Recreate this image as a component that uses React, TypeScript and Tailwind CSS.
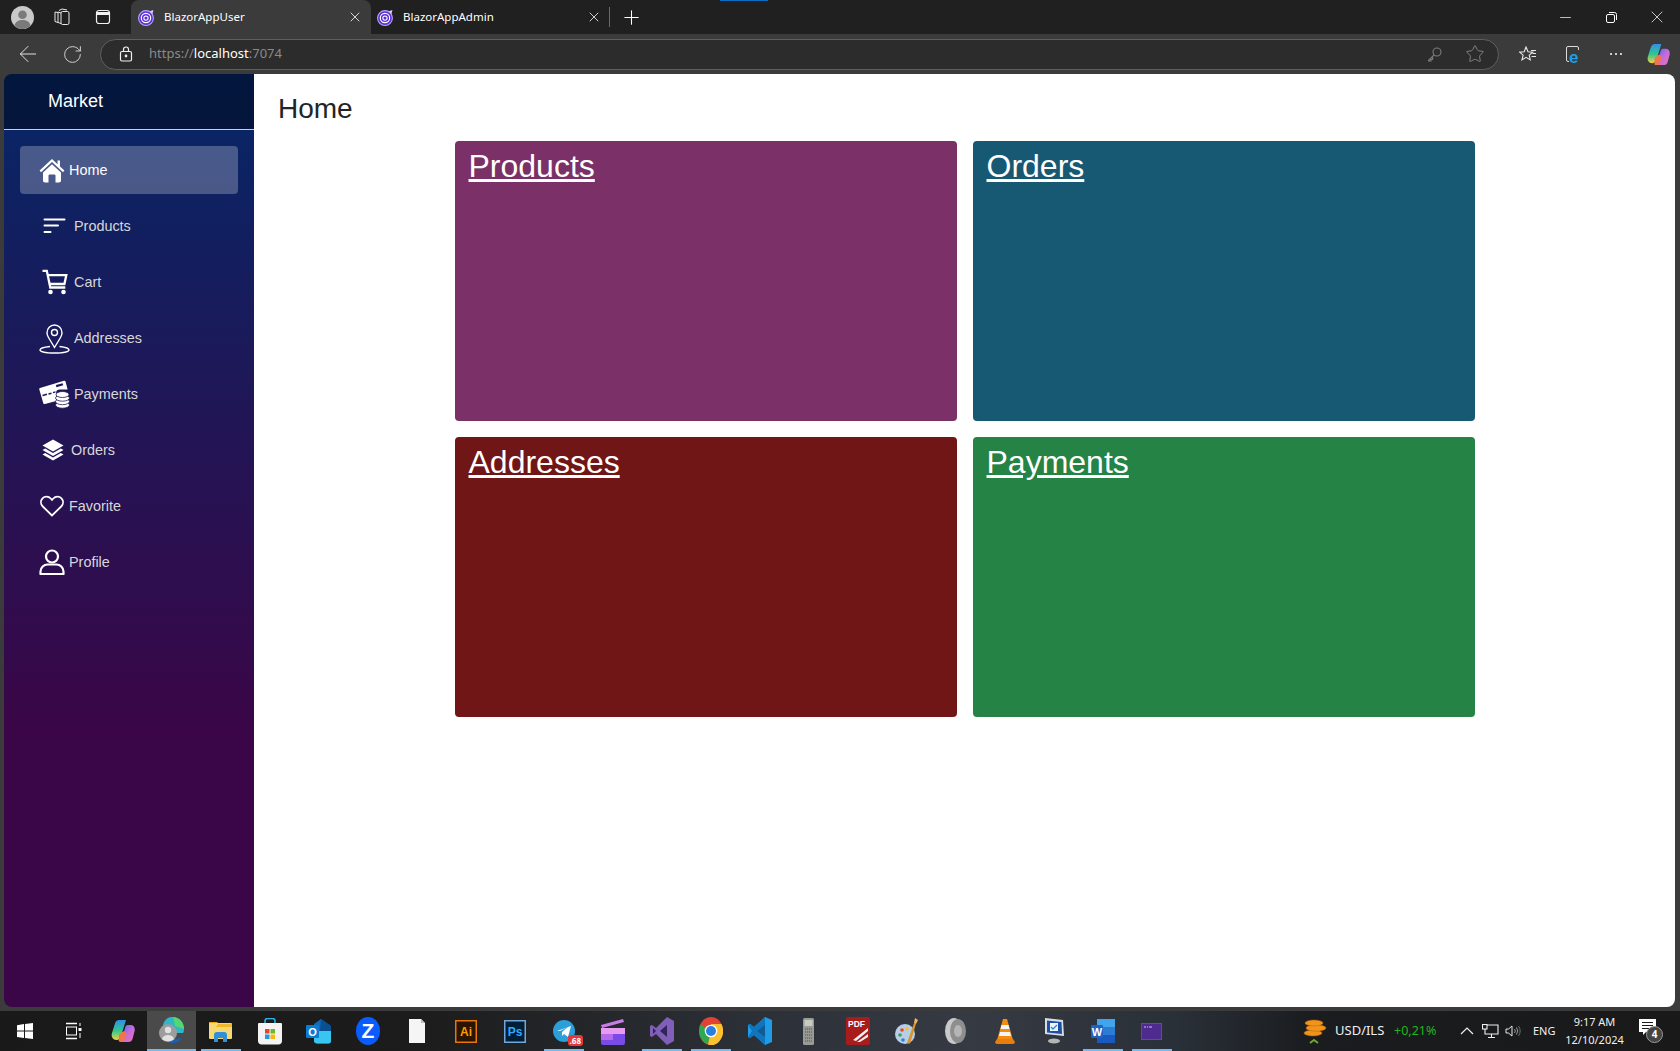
import { ArrowLeft, Minus, Plus, RotateCw, Star, X } from 'lucide-react';
import type { ReactNode } from 'react';

const SANS = "[font-family:'Liberation_Sans',Arial,sans-serif]";
const UI = "[font-family:'Noto_Sans','Open_Sans',sans-serif]";

function BlazorIcon() {
  return (
    <svg width="17" height="17" viewBox="0 0 16 16">
      <circle cx="7.5" cy="8.5" r="7" fill="#5c2fd6" stroke="#b9a6ff" strokeWidth="1" />
      <circle cx="7.5" cy="8.5" r="4.4" fill="none" stroke="#fff" strokeWidth="1.1" />
      <circle cx="7.5" cy="8.5" r="2" fill="none" stroke="#fff" strokeWidth="1" />
      <path d="M11 2 14.5 1 13.5 5z" fill="#d8ccff" />
    </svg>
  );
}

function CopilotLogo({ size = 24 }: { size?: number }) {
  return (
    <svg width={size} height={size} viewBox="0 0 24 24">
      <defs>
        <linearGradient id="cpA" x1="0" y1="0" x2="0" y2="1">
          <stop offset="0" stopColor="#2f8fe8" />
          <stop offset="0.55" stopColor="#35c88d" />
          <stop offset="1" stopColor="#f3d23c" />
        </linearGradient>
        <linearGradient id="cpB" x1="0" y1="0" x2="1" y2="1">
          <stop offset="0" stopColor="#3b6fe8" />
          <stop offset="0.5" stopColor="#c56be0" />
          <stop offset="1" stopColor="#f06fb0" />
        </linearGradient>
      </defs>
      <path d="M8 1h7L10 17c-.8 2.500-2 4-4.500 4C2 21 0 18 .8 14.500L4 4.500C4.600 2.300 6 1 8 1z" fill="url(#cpA)" />
      <path d="M10 23h7.500c2 0 3.400-1.200 4-3l2-7.500c1-3.500-.8-6.500-3.800-6.500h-3c-1.200 0-2 .7-2.300 1.800L11 19c-.3 1.500-.6 3-1 4z" fill="url(#cpB)" />
      <path d="M8 15l5-3 3 3-3.500 8H9.500c-1.500 0-2.200-1-1.700-2.500z" fill="#f0754d" />
    </svg>
  );
}

function HomeIcon() {
  return (
    <svg width="26" height="25" viewBox="0 0 26 25" fill="#fff">
      <path d="M13 1 .6 12.600 2 14.200 13 4.100l11 10.100 1.400-1.600-4.400-4.100V2.500h-2.500v3.700z" />
      <path d="M4 14.600 13 6.300l9 8.300v7.900c0 1.200-.8 2-2 2h-3.500v-6.600c0-.8-.5-1.300-1.300-1.300h-4.400c-.8 0-1.300.5-1.300 1.300v6.600H6c-1.200 0-2-.8-2-2z" />
    </svg>
  );
}

function LinesIcon() {
  return (
    <svg width="23" height="16" viewBox="0 0 23 16" fill="#fff">
      <rect x="0.500" y="0.500" width="22" height="2" rx="1" />
      <rect x="0.500" y="6.500" width="15.500" height="2" rx="1" />
      <rect x="0.500" y="13" width="8" height="2" rx="1" />
    </svg>
  );
}

function CartIcon() {
  return (
    <svg width="26" height="26" viewBox="0 0 26 26" fill="none" stroke="#fff" strokeWidth="2.300">
      <path d="M.5 1.800h4.300l3.500 16.700h15" />
      <path d="M5.800 6.200h18.500l-1.900 8.800H7.600" />
      <circle cx="8.500" cy="23" r="2.300" fill="#fff" stroke="none" />
      <circle cx="21.500" cy="23" r="2.300" fill="#fff" stroke="none" />
    </svg>
  );
}

function PinIcon() {
  return (
    <svg width="31" height="31" viewBox="0 0 31 31" fill="none" stroke="#fff" strokeWidth="1.400">
      <path d="M15.500 24.500 9.500 14.500c-1.200-2-1.500-3.300-1.500-4.700C8 5.500 11.300 2 15.500 2S23 5.500 23 9.800c0 1.400-.3 2.700-1.500 4.700z" />
      <circle cx="15.500" cy="9.500" r="3" />
      <path d="M11 23.500c-5 .5-10 1.700-10 3.500 0 1.700 6 3 14.500 3S30 28.700 30 27c0-1.800-5-3-9.500-3.500" />
    </svg>
  );
}

function PaymentIcon() {
  return (
    <svg width="31" height="29" viewBox="0 0 31 29">
      <path d="M1 8 25 .8c.8-.2 1.400.1 1.600.9l2 7.800h-8c-2 0-3.400 1-3.400 2.500v9L6 24c-.8.200-1.400 0-1.700-.8L.3 9.400C.1 8.800.4 8.200 1 8z" fill="#fff" />
      <rect x="17" y="4.200" width="7" height="2.200" fill="#1e1857" transform="rotate(-15 20 5)" />
      <path d="M3.500 15.500 8 14.300M9.500 14l3-.8M14 12.600l2.500-.7" stroke="#1e1857" strokeWidth="1.500" />
      <g fill="#fff" stroke="#1e1857" strokeWidth="0.800">
        <ellipse cx="23.500" cy="25" rx="7" ry="3.200" />
        <ellipse cx="23.500" cy="21.500" rx="7" ry="3.200" />
        <ellipse cx="23.500" cy="18" rx="7" ry="3.200" />
        <ellipse cx="23.500" cy="14.500" rx="6.500" ry="3" />
      </g>
    </svg>
  );
}

function LayersIcon() {
  return (
    <svg width="22" height="22" viewBox="0 0 22 22" fill="#fff">
      <path d="M11 .5 21.500 6.500 11 12.500.5 6.500z" />
      <path d="M3.200 9.500.5 11 11 17l10.500-6-2.700-1.500L11 14z" />
      <path d="M3.200 14 .5 15.500 11 21.500l10.500-6L18.800 14 11 18.500z" />
    </svg>
  );
}

function HeartIcon() {
  return (
    <svg width="24" height="22" viewBox="0 0 24 22" fill="none" stroke="#fff" strokeWidth="1.800">
      <path d="M12 20.500 2.800 11.500C.300 9 .500 5.500 2.500 3.300c2.300-2.300 6-2.200 8.200.2L12 5l1.300-1.500c2.200-2.400 5.900-2.500 8.200-.2 2 2.200 2.200 5.700-.3 8.200z" />
    </svg>
  );
}

function PersonIcon() {
  return (
    <svg width="26" height="26" viewBox="0 0 26 26" fill="none" stroke="#fff" strokeWidth="2.200">
      <circle cx="13" cy="7.500" r="6" />
      <path d="M1.500 25v-2.500c0-4 3.500-7 7-7h9c3.500 0 7 3 7 7V25z" strokeLinejoin="round" />
    </svg>
  );
}

const navItems: { label: string; slot: string; icon: ReactNode; active?: boolean }[] = [
  { label: 'Home', slot: 'w-[30px]', icon: <HomeIcon />, active: true },
  { label: 'Products', slot: 'w-[35px] pl-[4px]', icon: <LinesIcon /> },
  { label: 'Cart', slot: 'w-[35px] pl-[3px]', icon: <CartIcon /> },
  { label: 'Addresses', slot: 'w-[35px]', icon: <PinIcon /> },
  { label: 'Payments', slot: 'w-[35px]', icon: <PaymentIcon /> },
  { label: 'Orders', slot: 'w-[32px] pl-[3px]', icon: <LayersIcon /> },
  { label: 'Favorite', slot: 'w-[30px] pl-[1px]', icon: <HeartIcon /> },
  { label: 'Profile', slot: 'w-[30px]', icon: <PersonIcon /> },
];

const cards = [
  { title: 'Products', bg: 'bg-[#7b3067]' },
  { title: 'Orders', bg: 'bg-[#175873]' },
  { title: 'Addresses', bg: 'bg-[#701616]' },
  { title: 'Payments', bg: 'bg-[#248345]' },
];

function TitleBar() {
  return (
    <div className="relative flex h-[34px] shrink-0 items-center bg-[#202020] text-white">
      <div className="absolute left-[720px] top-0 h-[1px] w-[48px] bg-[#0a6cc4]" />
      <div className="flex w-[44px] justify-center">
        <svg width="23" height="23" viewBox="0 0 23 23">
          <circle cx="11.500" cy="11.500" r="11.500" fill="#c9c9c9" />
          <circle cx="11.500" cy="8.800" r="4.300" fill="#7a7a7a" />
          <path d="M3.500 19.500c1-4 4-5.500 8-5.500s7 1.500 8 5.500c-2 2-5 3.500-8 3.500s-6-1.500-8-3.500z" fill="#7a7a7a" />
        </svg>
      </div>
      <div className="flex w-[36px] justify-center">
        <svg width="18" height="18" viewBox="0 0 18 18" fill="none" stroke="#e8e8e8" strokeWidth="1">
          <rect x="8" y="3.500" width="8" height="13" rx="1.500" />
          <path d="M8 5 5 4v10.500l3 1M5 4.500 2 4v9.500l3 1" />
          <path d="M6 2.500l3-1.500 5 1" />
        </svg>
      </div>
      <div className="flex w-[46px] justify-center">
        <svg width="16" height="16" viewBox="0 0 16 16" fill="none" stroke="#f2f2f2" strokeWidth="1.200">
          <rect x="1.500" y="1.500" width="13" height="13" rx="2.500" />
          <path d="M1.500 4.500h13" strokeWidth="3" />
        </svg>
      </div>
      <div className="ml-[5px] flex h-full w-[240px] items-center rounded-t-lg bg-[#3b3b3b] pl-[7px] pr-[8px]">
        <BlazorIcon />
        <span className={`ml-[9px] flex-1 text-[11.5px] ${UI}`}>BlazorAppUser</span>
        <X size={16} strokeWidth={1.2} />
      </div>
      <div className="flex h-full w-[238px] items-center pl-[6px] pr-[7px]">
        <BlazorIcon />
        <span className={`ml-[9px] flex-1 text-[11.5px] ${UI}`}>BlazorAppAdmin</span>
        <X size={16} strokeWidth={1.2} />
      </div>
      <div className="h-[20px] w-px bg-[#6a6a6a]" />
      <Plus className="ml-[10px]" size={23} strokeWidth={1.1} />
      <div className="ml-auto flex items-center">
        <div className="flex w-[46px] justify-center"><Minus size={17} strokeWidth={1} /></div>
        <div className="flex w-[46px] justify-center">
          <svg width="11" height="11" viewBox="0 0 11 11" fill="none" stroke="#fff" strokeWidth="1">
            <rect x="0.500" y="2.500" width="8" height="8" rx="1.500" />
            <path d="M3 .5h5.500a2 2 0 0 1 2 2V8" />
          </svg>
        </div>
        <div className="flex w-[46px] justify-center"><X size={20} strokeWidth={0.9} /></div>
      </div>
    </div>
  );
}

function Toolbar() {
  return (
    <div className="flex h-[40px] shrink-0 items-center bg-[#3b3b3b] text-[#e4e4e4]">
      <div className="flex w-[50px] justify-center pl-[5px]"><ArrowLeft size={26} strokeWidth={0.9} /></div>
      <div className="flex w-[44px] justify-center"><RotateCw size={21} strokeWidth={1} /></div>
      <div className="ml-[6px] flex h-[31px] w-[1399px] items-center rounded-full border border-[#5f5f5f] bg-[#2c2c2c] pl-[18px] pr-[14px]">
        <svg width="14" height="16" viewBox="0 0 14 16" fill="none" stroke="#f0f0f0" strokeWidth="1.200">
          <rect x="1.500" y="5.500" width="11" height="9.500" rx="1.500" />
          <path d="M4.500 5.500V3.500a2.500 2.500 0 0 1 5 0v2" />
          <circle cx="7" cy="10" r="0.800" fill="#f0f0f0" />
        </svg>
        <span className={`ml-[16px] flex-1 text-[13px] text-[#8a8a8a] ${UI}`}>
          https://<span className="text-white">localhost</span>:7074
        </span>
        <svg className="mr-[23px]" width="15" height="15" viewBox="0 0 15 15" fill="none" stroke="#7c7c7c" strokeWidth="1.100">
          <circle cx="10" cy="5" r="4" />
          <path d="M7 8 1.500 13.500V14H4v-1.500h1.500V11h1" />
        </svg>
        <Star className="-mr-[1px] text-[#8f8f8f]" size={20} strokeWidth={1} />
      </div>
      <div className="ml-[19px] flex w-[19px] justify-center">
        <svg width="18" height="17" viewBox="0 0 18 17" fill="none" stroke="#e8e8e8" strokeWidth="1.100">
          <path d="M7 1 9 5.800l4.800.3-3.600 3.100 1.100 4.700L7 11.300 3 13.900l1.100-4.700L.6 6.100l4.600-.3z" />
          <path d="M12 4.500h5M13.500 7.500H17M12.500 10.500H17" />
        </svg>
      </div>
      <div className="ml-[25px] flex w-[21px] items-center justify-center">
        <span className="relative block h-[16px] w-[13px] rounded-[2px] border border-[#dcdcdc]">
          <span className={`absolute -bottom-[4px] left-[2px] h-[15px] bg-[#3b3b3b] pr-[1px] text-[17px] font-bold leading-[15px] text-[#1a9fe8] ${SANS}`}>e</span>
        </span>
      </div>
      <div className="ml-[23px] flex w-[19px] items-center justify-center gap-[3px]">
        <span className="h-[2px] w-[2px] rounded-full bg-white" />
        <span className="h-[2px] w-[2px] rounded-full bg-white" />
        <span className="h-[2px] w-[2px] rounded-full bg-white" />
      </div>
      <div className="ml-[21px] flex w-[24px] justify-center"><CopilotLogo size={23} /></div>
    </div>
  );
}

function Sidebar() {
  return (
    <aside className={`flex w-[250px] shrink-0 flex-col bg-[linear-gradient(180deg,#052767_0%,#3a0647_70%)] ${SANS}`}>
      <div className="flex h-[56px] shrink-0 items-center border-b border-[#c9cfdc] bg-black/40 pl-[44px] text-[18px] text-white">
        Market
      </div>
      <nav className="flex flex-col pt-[16px]">
        {navItems.map((item) => (
          <a
            key={item.label}
            href="#"
            className={`mx-[16px] mb-[8px] flex h-[48px] items-center rounded-[4px] pl-[19px] text-[14.4px] ${
              item.active ? 'bg-white/25 text-white' : 'text-[#d7d7d7]'
            }`}
          >
            <span className={`flex shrink-0 items-center ${item.slot}`}>{item.icon}</span>
            <span className="pt-[1px]">{item.label}</span>
          </a>
        ))}
      </nav>
    </aside>
  );
}

function Main() {
  return (
    <main className={`flex-1 bg-white pl-[24px] pt-[18px] text-[#212529] ${SANS}`}>
      <h1 className="h-[49px] text-[28px] leading-[34px]">Home</h1>
      <div className="ml-[177px] grid w-[1020px] grid-cols-2 gap-4">
        {cards.map((card) => (
          <div key={card.title} className={`h-[280px] rounded-[4px] px-[13.5px] py-[5px] ${card.bg}`}>
            <a href="#" className="text-[32px] leading-[41px] text-white underline">{card.title}</a>
          </div>
        ))}
      </div>
    </main>
  );
}

function Windows() {
  return (
    <svg width="16" height="16" viewBox="0 0 16 16" fill="#fff">
      <path d="M0 2.200 7 1v6.500H0zM8 .9 16 0v7.500H8zM0 8.500h7V15L0 14zM8 8.500h8V16l-8-1z" />
    </svg>
  );
}

function TaskView() {
  return (
    <svg width="17" height="18" viewBox="0 0 17 18" fill="none" stroke="#fff" strokeWidth="1">
      <path d="M1 1.500h11M1 16.500h11" strokeWidth="1.500" />
      <rect x="1.500" y="5" width="10" height="8" />
      <rect x="13.500" y="6" width="3" height="3" fill="#fff" stroke="none" />
      <path d="M15 1v3M15 11v5" />
    </svg>
  );
}

function EdgeProfile() {
  return (
    <svg width="26" height="28" viewBox="0 0 26 28">
      <path d="M13 0c7 0 12 5 12 12 0 2-.5 3-1 4H4C2 6 7 0 13 0z" fill="#2fb6c7" />
      <path d="M14 0c6 0 11 5 11 12l-9-3c-1-4-1-7-2-9z" fill="#56d66f" />
      <path d="M8 24c5 4 12 2 15-3l-8 1z" fill="#1a5fb4" />
      <circle cx="9" cy="16" r="9" fill="#9d9d9d" />
      <circle cx="9" cy="13" r="3.200" fill="#e1e1e1" />
      <path d="M3 22c1-3 3-4 6-4s5 1 6 4c-3 3-9 3-12 0z" fill="#e1e1e1" />
    </svg>
  );
}

function Folder() {
  return (
    <svg width="23" height="22" viewBox="0 0 23 22">
      <path d="M0 2h8l2 2h-10z" fill="#e8a81a" />
      <rect y="3" width="23" height="16" rx="1" fill="#f8d775" />
      <path d="M0 7h23V4H9L7 7z" fill="#f0b92b" />
      <path d="M5 22V15c0-2 1-3 3-3h7c2 0 3 1 3 3v7h-4v-4H9v4z" fill="#2f8fd8" />
    </svg>
  );
}

function Store() {
  return (
    <svg width="24" height="27" viewBox="0 0 24 27">
      <path d="M7 6V3c0-1.500 1-2.500 2.500-2.500h5C16 .5 17 1.500 17 3v3" fill="none" stroke="#2bb4e8" strokeWidth="1.500" />
      <path d="M1 5h22a1 1 0 0 1 1 1v17c0 2-1.500 3.500-3.500 3.500h-17C1.500 26.500 0 25 0 23V6a1 1 0 0 1 1-1z" fill="#f3f3f3" />
      <rect x="7" y="11" width="4.500" height="4.500" fill="#e8452c" />
      <rect x="12.500" y="11" width="4.500" height="4.500" fill="#6fb82c" />
      <rect x="7" y="16.500" width="4.500" height="4.500" fill="#1f9bde" />
      <rect x="12.500" y="16.500" width="4.500" height="4.500" fill="#f7b80f" />
    </svg>
  );
}

function Outlook() {
  return (
    <svg width="25" height="25" viewBox="0 0 25 25">
      <path d="M8 5 15 0l10 7v15c0 1.500-1 2.500-2.500 2.500H11c-1.500 0-3-1-3-2.500z" fill="#0f6cbd" />
      <path d="M8 12h17v10c0 1.500-1 2.500-2.500 2.500H11c-1.500 0-3-1-3-2.500z" fill="#38c5f0" />
      <path d="M15 0l10 7v5H14z" fill="#0a4f8f" />
      <rect y="6" width="13" height="13" rx="1" fill="#0e7ad1" />
      <text x="6.500" y="16.500" textAnchor="middle" fill="#fff" fontSize="11" fontWeight="700" fontFamily="Liberation Sans">O</text>
    </svg>
  );
}

function ZoomApp() {
  return (
    <svg width="24" height="28" viewBox="0 0 24 28">
      <ellipse cx="12" cy="14" rx="12" ry="14" fill="#0b5cff" />
      <text x="12" y="21" textAnchor="middle" fill="#fff" fontSize="21" fontWeight="700" fontFamily="Liberation Sans">Z</text>
    </svg>
  );
}

function BlankFile() {
  return (
    <svg width="16" height="24" viewBox="0 0 16 24">
      <path d="M0 0h12l4 4v20H0z" fill="#f5f5f5" />
      <path d="M12 0v4h4z" fill="#bdbdbd" />
    </svg>
  );
}

function LabelBox({ label, bg, color, border }: { label: string; bg: string; color: string; border: string }) {
  return (
    <svg width="22" height="23" viewBox="0 0 22 23">
      <rect x="0.750" y="0.750" width="20.500" height="21.500" fill={bg} stroke={border} strokeWidth="1.500" />
      <text x="11" y="16" textAnchor="middle" fill={color} fontSize="12" fontWeight="700" fontFamily="Liberation Sans">{label}</text>
    </svg>
  );
}

function Telegram() {
  return (
    <svg width="22" height="24" viewBox="0 0 22 24">
      <circle cx="11" cy="12" r="11" fill="#2a9fd8" />
      <path d="M4 12 18 7l-3 11-4-3-2 2v-4l6-5-8 4z" fill="#fff" />
    </svg>
  );
}

function Clapper() {
  return (
    <svg width="24" height="27" viewBox="0 0 24 27">
      <path d="M0 7 22 1l1 3L1 10z" fill="#c77de8" />
      <rect y="10" width="24" height="17" rx="2" fill="#7b4be8" />
      <rect y="10" width="24" height="6" fill="#e79af0" />
      <rect y="16" width="12" height="6" fill="#b36bee" />
    </svg>
  );
}

function VisualStudio() {
  return (
    <svg width="24" height="28" viewBox="0 0 24 28">
      <path d="M17 0 24 4v20l-7 4-11-11-4 3-2-1V9l2-1 4 3z" fill="#7f5fb8" />
      <path d="M17 8v12l-7-6z" fill="#34235a" />
      <path d="M3 11v6l3-3z" fill="#34235a" />
    </svg>
  );
}

function Chrome() {
  return (
    <svg width="24" height="28" viewBox="0 0 24 28">
      <ellipse cx="12" cy="14" rx="12" ry="14" fill="#e34133" />
      <path d="M12 14 1.600 7.500A12 14 0 0 0 9 27.600z" fill="#2fa84f" />
      <path d="M12 7h10.400A12 14 0 0 1 9 27.600L12 14z" fill="#fbc02d" />
      <circle cx="12" cy="14" r="6.300" fill="#fff" />
      <circle cx="12" cy="14" r="5" fill="#2a7de1" />
    </svg>
  );
}

function VsCode() {
  return (
    <svg width="24" height="28" viewBox="0 0 24 28">
      <path d="M17 0 24 3v22l-7 3L6 18l-4 3-2-1v-12l2-1 4 3z" fill="#1e9ce8" />
      <path d="M17 0v28L6 18l-4 3-2-1 4-6-4-6 2-1 4 3z" fill="#0f75bf" />
      <path d="M17 8 9 14l8 6z" fill="#1b1f27" opacity="0.300" />
    </svg>
  );
}

function Calculator() {
  return (
    <svg width="11" height="27" viewBox="0 0 11 27">
      <rect width="11" height="27" rx="1.500" fill="#9a9a96" />
      <rect x="1.500" y="2" width="8" height="6" fill="#c7cdbd" />
      <path d="M2 11h7M2 14h7M2 17h7M2 20h7M2 23h7" stroke="#55554f" strokeDasharray="1.200 0.800" />
    </svg>
  );
}

function PdfApp() {
  return (
    <svg width="24" height="28" viewBox="0 0 24 28">
      <rect width="24" height="28" rx="2" fill="#a81c1c" />
      <text x="2" y="10" fill="#fff" fontSize="8.500" fontWeight="700" fontFamily="Liberation Sans">PDF</text>
      <path d="M7 23 22 11v3L10 24zM11 25l11-8v3l-8 5z" fill="#f2f2f2" />
    </svg>
  );
}

function Palette() {
  return (
    <svg width="24" height="28" viewBox="0 0 24 28">
      <ellipse cx="10" cy="17" rx="10" ry="10" fill="#b6cfe6" />
      <circle cx="7" cy="13" r="1.800" fill="#e8452c" />
      <circle cx="12" cy="12" r="1.800" fill="#f2c12e" />
      <circle cx="5" cy="18" r="1.800" fill="#3e9e4f" />
      <circle cx="8" cy="23" r="1.800" fill="#2f7fd8" />
      <path d="M12 26 19 6l2 .8-6 20z" fill="#d89530" />
      <path d="M19 6l1-5 3 2-2 4z" fill="#f0b860" />
    </svg>
  );
}

function Speaker() {
  return (
    <svg width="21" height="26" viewBox="0 0 21 26">
      <ellipse cx="9" cy="13" rx="9" ry="13" fill="#c9c9c9" />
      <ellipse cx="13" cy="13" rx="8" ry="12" fill="#8e8e8e" />
      <ellipse cx="13" cy="13" rx="4" ry="6" fill="#b5b5b5" />
    </svg>
  );
}

function Vlc() {
  return (
    <svg width="20" height="25" viewBox="0 0 20 25">
      <path d="M8 0h4l6 21H2z" fill="#f28c13" />
      <path d="M6.500 6h7l1 4h-9zM5 13h10l1 4H4z" fill="#f5f5f5" />
      <path d="M2 20h16l2 3c0 1-1 2-2 2H2c-1 0-2-1-2-2z" fill="#e87c0c" />
    </svg>
  );
}

function MonitorApp() {
  return (
    <svg width="20" height="26" viewBox="0 0 20 26">
      <path d="M1 0 19 2l1 16-19-2z" fill="#d8dde3" />
      <path d="M3 2.500 17.500 4l.5 12L3 14.500z" fill="#1c4fa8" />
      <rect x="6" y="5" width="8" height="8" fill="#f1f5fa" />
      <path d="M7 9l2 2 4-4" stroke="#1c8de0" strokeWidth="1.300" fill="none" />
      <ellipse cx="10" cy="23" rx="6" ry="2.500" fill="#b5b5b5" />
    </svg>
  );
}

function Word() {
  return (
    <svg width="24" height="24" viewBox="0 0 24 24">
      <rect x="6" width="18" height="8" fill="#41a5ee" />
      <rect x="6" y="8" width="18" height="8" fill="#2b7cd3" />
      <rect x="6" y="16" width="18" height="8" fill="#185abd" />
      <rect y="6" width="12" height="13" rx="1" fill="#1e63c4" />
      <text x="6" y="16.500" textAnchor="middle" fill="#fff" fontSize="11" fontWeight="700" fontFamily="Liberation Sans">W</text>
    </svg>
  );
}

function Terminal() {
  return (
    <svg width="21" height="17" viewBox="0 0 21 17">
      <rect x="0.500" y="0.500" width="20" height="16" fill="#4f2b8f" stroke="#5a5a5a" />
      <path d="M3 4h2M6 4h1M8 4h3" stroke="#d0c6e8" strokeWidth="1" />
    </svg>
  );
}

const taskbarApps: { id: string; icon: ReactNode; open?: boolean; active?: boolean; badge?: string }[] = [
  { id: 'start', icon: <Windows /> },
  { id: 'taskview', icon: <TaskView /> },
  { id: 'copilot', icon: <CopilotLogo /> },
  { id: 'edge', icon: <EdgeProfile />, open: true, active: true },
  { id: 'explorer', icon: <Folder />, open: true },
  { id: 'store', icon: <Store /> },
  { id: 'outlook', icon: <Outlook /> },
  { id: 'zoom', icon: <ZoomApp /> },
  { id: 'file', icon: <BlankFile /> },
  { id: 'ai', icon: <LabelBox label="Ai" bg="#2b1500" color="#ff9a00" border="#e8760a" /> },
  { id: 'ps', icon: <LabelBox label="Ps" bg="#001e36" color="#31a8ff" border="#6fa8dc" /> },
  { id: 'telegram', icon: <Telegram />, open: true, badge: '.68' },
  { id: 'clapper', icon: <Clapper /> },
  { id: 'vs', icon: <VisualStudio />, open: true },
  { id: 'chrome', icon: <Chrome />, open: true },
  { id: 'vscode', icon: <VsCode /> },
  { id: 'calc', icon: <Calculator /> },
  { id: 'pdf', icon: <PdfApp /> },
  { id: 'paint', icon: <Palette /> },
  { id: 'speaker', icon: <Speaker /> },
  { id: 'vlc', icon: <Vlc /> },
  { id: 'monitor', icon: <MonitorApp /> },
  { id: 'word', icon: <Word />, open: true },
  { id: 'terminal', icon: <Terminal />, open: true },
];

function Taskbar() {
  return (
    <div className={`flex h-[40px] shrink-0 items-stretch bg-[linear-gradient(90deg,#191919_0%,#1c1c1c_25%,#2e333b_48%,#363a42_58%,#2a3038_70%,#1a1c1f_78%,#191919_100%)] text-[#f0f0f0] ${UI}`}>
      {taskbarApps.map((app) => (
        <div key={app.id} className={`relative flex w-[49px] items-center justify-center ${app.active ? 'bg-[#4a4a4a]' : ''}`}>
          {app.icon}
          {app.open && <span className={`absolute bottom-0 h-[2px] bg-[#76b9ed] ${app.active ? 'w-full' : 'w-[40px]'}`} />}
          {app.badge && (
            <span className="absolute bottom-[5px] right-[5px] rounded-[3px] bg-[#e5383b] px-[2px] text-[8px] font-bold leading-[11px] text-white">
              {app.badge}
            </span>
          )}
        </div>
      ))}
      <div className="ml-auto flex items-center pr-[15px]">
        <svg width="24" height="26" viewBox="0 0 24 26">
          <g fill="#f0941c" stroke="#b8640c" strokeWidth="0.500">
            <ellipse cx="10" cy="15" rx="9" ry="3" />
            <ellipse cx="13" cy="10" rx="10" ry="3.200" />
            <ellipse cx="11" cy="5" rx="9" ry="3" />
          </g>
          <path d="M7 25l4-3 4 3" fill="none" stroke="#6fa82a" strokeWidth="2" />
        </svg>
        <span className="ml-[8px] w-[50px] text-[13px]">USD/ILS</span>
        <span className="ml-[9px] w-[66px] text-[12.5px] text-[#1fb51f]">+0,21%</span>
        <svg width="14" height="8" viewBox="0 0 14 8" fill="none" stroke="#f0f0f0" strokeWidth="1.200">
          <path d="M1 7l6-6 6 6" />
        </svg>
        <svg className="ml-[8px]" width="17" height="14" viewBox="0 0 17 14" fill="none" stroke="#f0f0f0" strokeWidth="1.100">
          <path d="M4 1h12v9H3V5" />
          <rect x="0.500" y="0.500" width="4.500" height="4.500" fill="#1b1b1b" />
          <path d="M9.500 10v3M6 13.500h7" />
        </svg>
        <svg className="ml-[6px]" width="17" height="14" viewBox="0 0 17 14" fill="none" stroke="#e8e8e8" strokeWidth="1">
          <path d="M1 5h2.500L7 2v10L3.500 9H1z" />
          <path d="M9.500 5a3 3 0 0 1 0 4M11.500 3.500a6 6 0 0 1 0 7" stroke="#9a9a9a" />
          <path d="M13.500 2a9 9 0 0 1 0 10" stroke="#6f6f6f" />
        </svg>
        <span className="ml-[11px] w-[23px] text-[11px]">ENG</span>
        <div className="ml-[9px] flex w-[59px] flex-col items-center text-[11px] leading-[18px]">
          <span>9:17 AM</span>
          <span>12/10/2024</span>
        </div>
        <div className="relative ml-[15px] h-[24px] w-[26px]">
          <svg width="18" height="17" viewBox="0 0 18 17" fill="#fff">
            <path d="M0 0h17v13H7l-3 3v-3H0z" />
            <path d="M3 3.500h11M3 6.500h11M3 9.500h7" stroke="#1b1b1b" />
          </svg>
          <span className="absolute bottom-0 right-[2px] flex h-[17px] w-[17px] items-center justify-center rounded-full border border-[#9a9a9a] bg-[#444] text-[10px] font-bold text-white">4</span>
        </div>
      </div>
    </div>
  );
}

export default function App() {
  return (
    <div className="flex h-screen w-full flex-col overflow-hidden bg-[#3b3b3b]">
      <TitleBar />
      <Toolbar />
      <div className="flex min-h-0 flex-1 overflow-hidden pb-[4px] pl-[4px] pr-[5px]">
        <div className="flex w-full overflow-hidden rounded-lg">
          <Sidebar />
          <Main />
        </div>
      </div>
      <Taskbar />
    </div>
  );
}
